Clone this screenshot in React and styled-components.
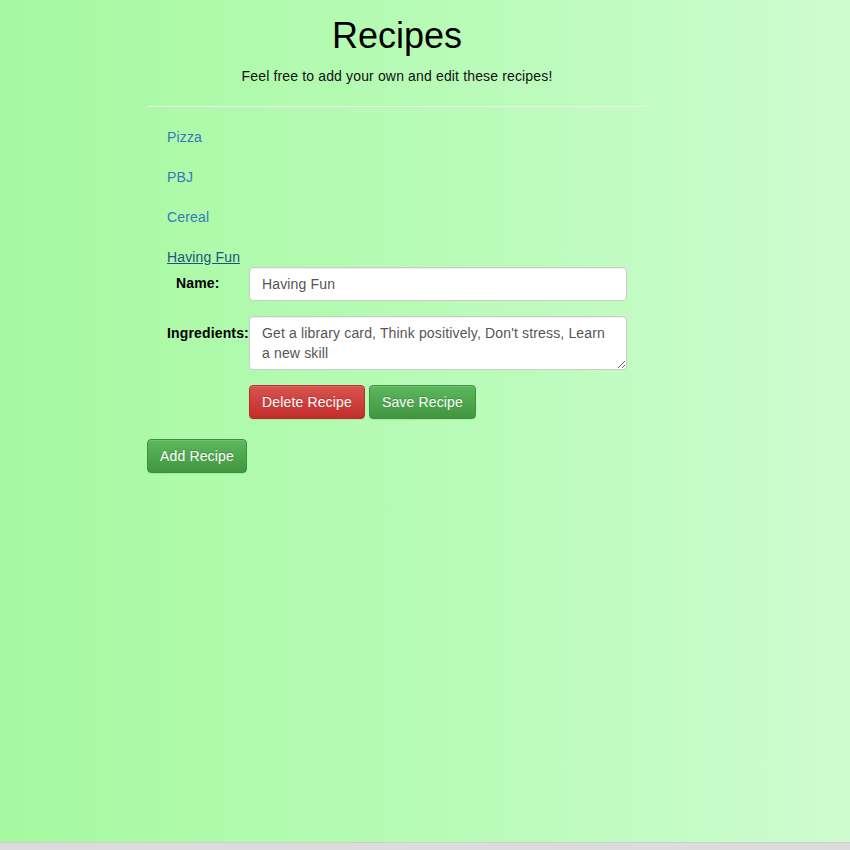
import styled, { createGlobalStyle } from "styled-components";

const Global = createGlobalStyle`
  html, body {
    margin: 0;
    padding: 0;
  }
  body {
    font-family: "Liberation Sans", Arial, sans-serif;
    font-size: 14px;
    line-height: 1.42857;
    letter-spacing: 0.15px;
    color: #333;
  }
  * { box-sizing: border-box; }
`;

const Page = styled.div`
  min-height: 842px;
  background: linear-gradient(90deg, #a6f9a0 0%, #b7fbb6 50%, #cefcd0 100%);
  overflow: hidden;
`;

const ScrollStrip = styled.div`
  height: 8px;
  background: #dcdcdc;
  border-top: 1px solid #cfcfcf;
`;

const Container = styled.div`
  width: 500px;
  margin-left: 147px;
`;

const Title = styled.h1`
  margin: 16px 0 10px;
  font-size: 36px;
  font-weight: 500;
  line-height: 1.1;
  letter-spacing: 0;
  text-align: center;
  color: #000;
`;

const Lead = styled.p`
  margin: 0 0 10px;
  padding-top: 1px;
  line-height: 19px;
  text-align: center;
  color: #111;
`;

const Rule = styled.hr`
  margin: 20px 0;
  border: 0;
  border-top: 1px solid #eee;
`;

const List = styled.ul`
  list-style: none;
  margin: 0;
  padding: 0 20px;
  display: flex;
  flex-direction: column;
  gap: 20px;
`;

const Item = styled.li`
  height: 20px;
  padding-top: 1px;
  line-height: 19px;
`;

const RecipeLink = styled.a`
  color: ${(p) => (p.$active ? "#23527c" : "#337ab7")};
  text-decoration: ${(p) => (p.$active ? "underline" : "none")};
  cursor: pointer;
`;

const Editor = styled.form`
  margin: 0;
  padding: 0 20px;
  display: grid;
  grid-template-columns: 82px 1fr;
  row-gap: 15px;
`;

const Label = styled.label`
  font-weight: bold;
  color: #000;
  padding-left: ${(p) => p.$indent || 0}px;
  padding-top: ${(p) => (p.$top ? 8 : 1)}px;
  align-self: ${(p) => (p.$top ? "start" : "center")};
  white-space: nowrap;
`;

const Field = styled.input`
  display: block;
  width: 100%;
  height: 34px;
  padding: 6px 12px;
  font: inherit;
  letter-spacing: inherit;
  color: #555;
  background: #fff;
  border: 1px solid #ccc;
  border-radius: 4px;
  box-shadow: inset 0 1px 1px rgba(0, 0, 0, 0.075);
`;

const Area = styled.textarea`
  display: block;
  width: 100%;
  height: 54px;
  padding: 6px 12px;
  font: inherit;
  letter-spacing: inherit;
  line-height: 20px;
  color: #555;
  background: #fff;
  border: 1px solid #ccc;
  border-radius: 4px;
  box-shadow: inset 0 1px 1px rgba(0, 0, 0, 0.075);
  resize: vertical;
`;

const Actions = styled.div`
  grid-column: 2;
  display: flex;
  gap: 4px;
`;

const tones = {
  danger: { from: "#d9534f", to: "#c12e2a", border: "#b92c28" },
  success: { from: "#5cb85c", to: "#419641", border: "#3e8f3e" },
};

const Button = styled.button`
  display: inline-block;
  height: 34px;
  padding: 7px 12px 5px;
  font: inherit;
  letter-spacing: inherit;
  color: #fff;
  text-shadow: 0 -1px 0 rgba(0, 0, 0, 0.2);
  background: linear-gradient(
    to bottom,
    ${(p) => tones[p.$tone].from} 0%,
    ${(p) => tones[p.$tone].to} 100%
  );
  border: 1px solid ${(p) => tones[p.$tone].border};
  border-radius: 4px;
  box-shadow: inset 0 1px 0 rgba(255, 255, 255, 0.15), 0 1px 1px rgba(0, 0, 0, 0.075);
  cursor: pointer;
`;

const Footer = styled.div`
  margin-top: 20px;
`;

const recipes = [
  { name: "Pizza" },
  { name: "PBJ" },
  { name: "Cereal" },
  { name: "Having Fun", ingredients: "Get a library card, Think positively, Don't stress, Learn a new skill" },
];

const App = () => {
  const open = recipes[3];

  return (
    <>
      <Global />
      <Page>
        <Container>
          <Title>Recipes</Title>
          <Lead>Feel free to add your own and edit these recipes!</Lead>
          <Rule />

          <List>
            {recipes.map((r) => (
              <Item key={r.name}>
                <RecipeLink $active={r === open}>{r.name}</RecipeLink>
              </Item>
            ))}
          </List>

          <Editor onSubmit={(e) => e.preventDefault()}>
            <Label $indent={9}>Name:</Label>
            <Field defaultValue={open.name} />

            <Label $top>Ingredients:</Label>
            <Area rows={2} defaultValue={open.ingredients} />

            <Actions>
              <Button type="button" $tone="danger">Delete Recipe</Button>
              <Button type="submit" $tone="success">Save Recipe</Button>
            </Actions>
          </Editor>

          <Footer>
            <Button type="button" $tone="success">Add Recipe</Button>
          </Footer>
        </Container>
      </Page>
      <ScrollStrip />
    </>
  );
};

export default App;
